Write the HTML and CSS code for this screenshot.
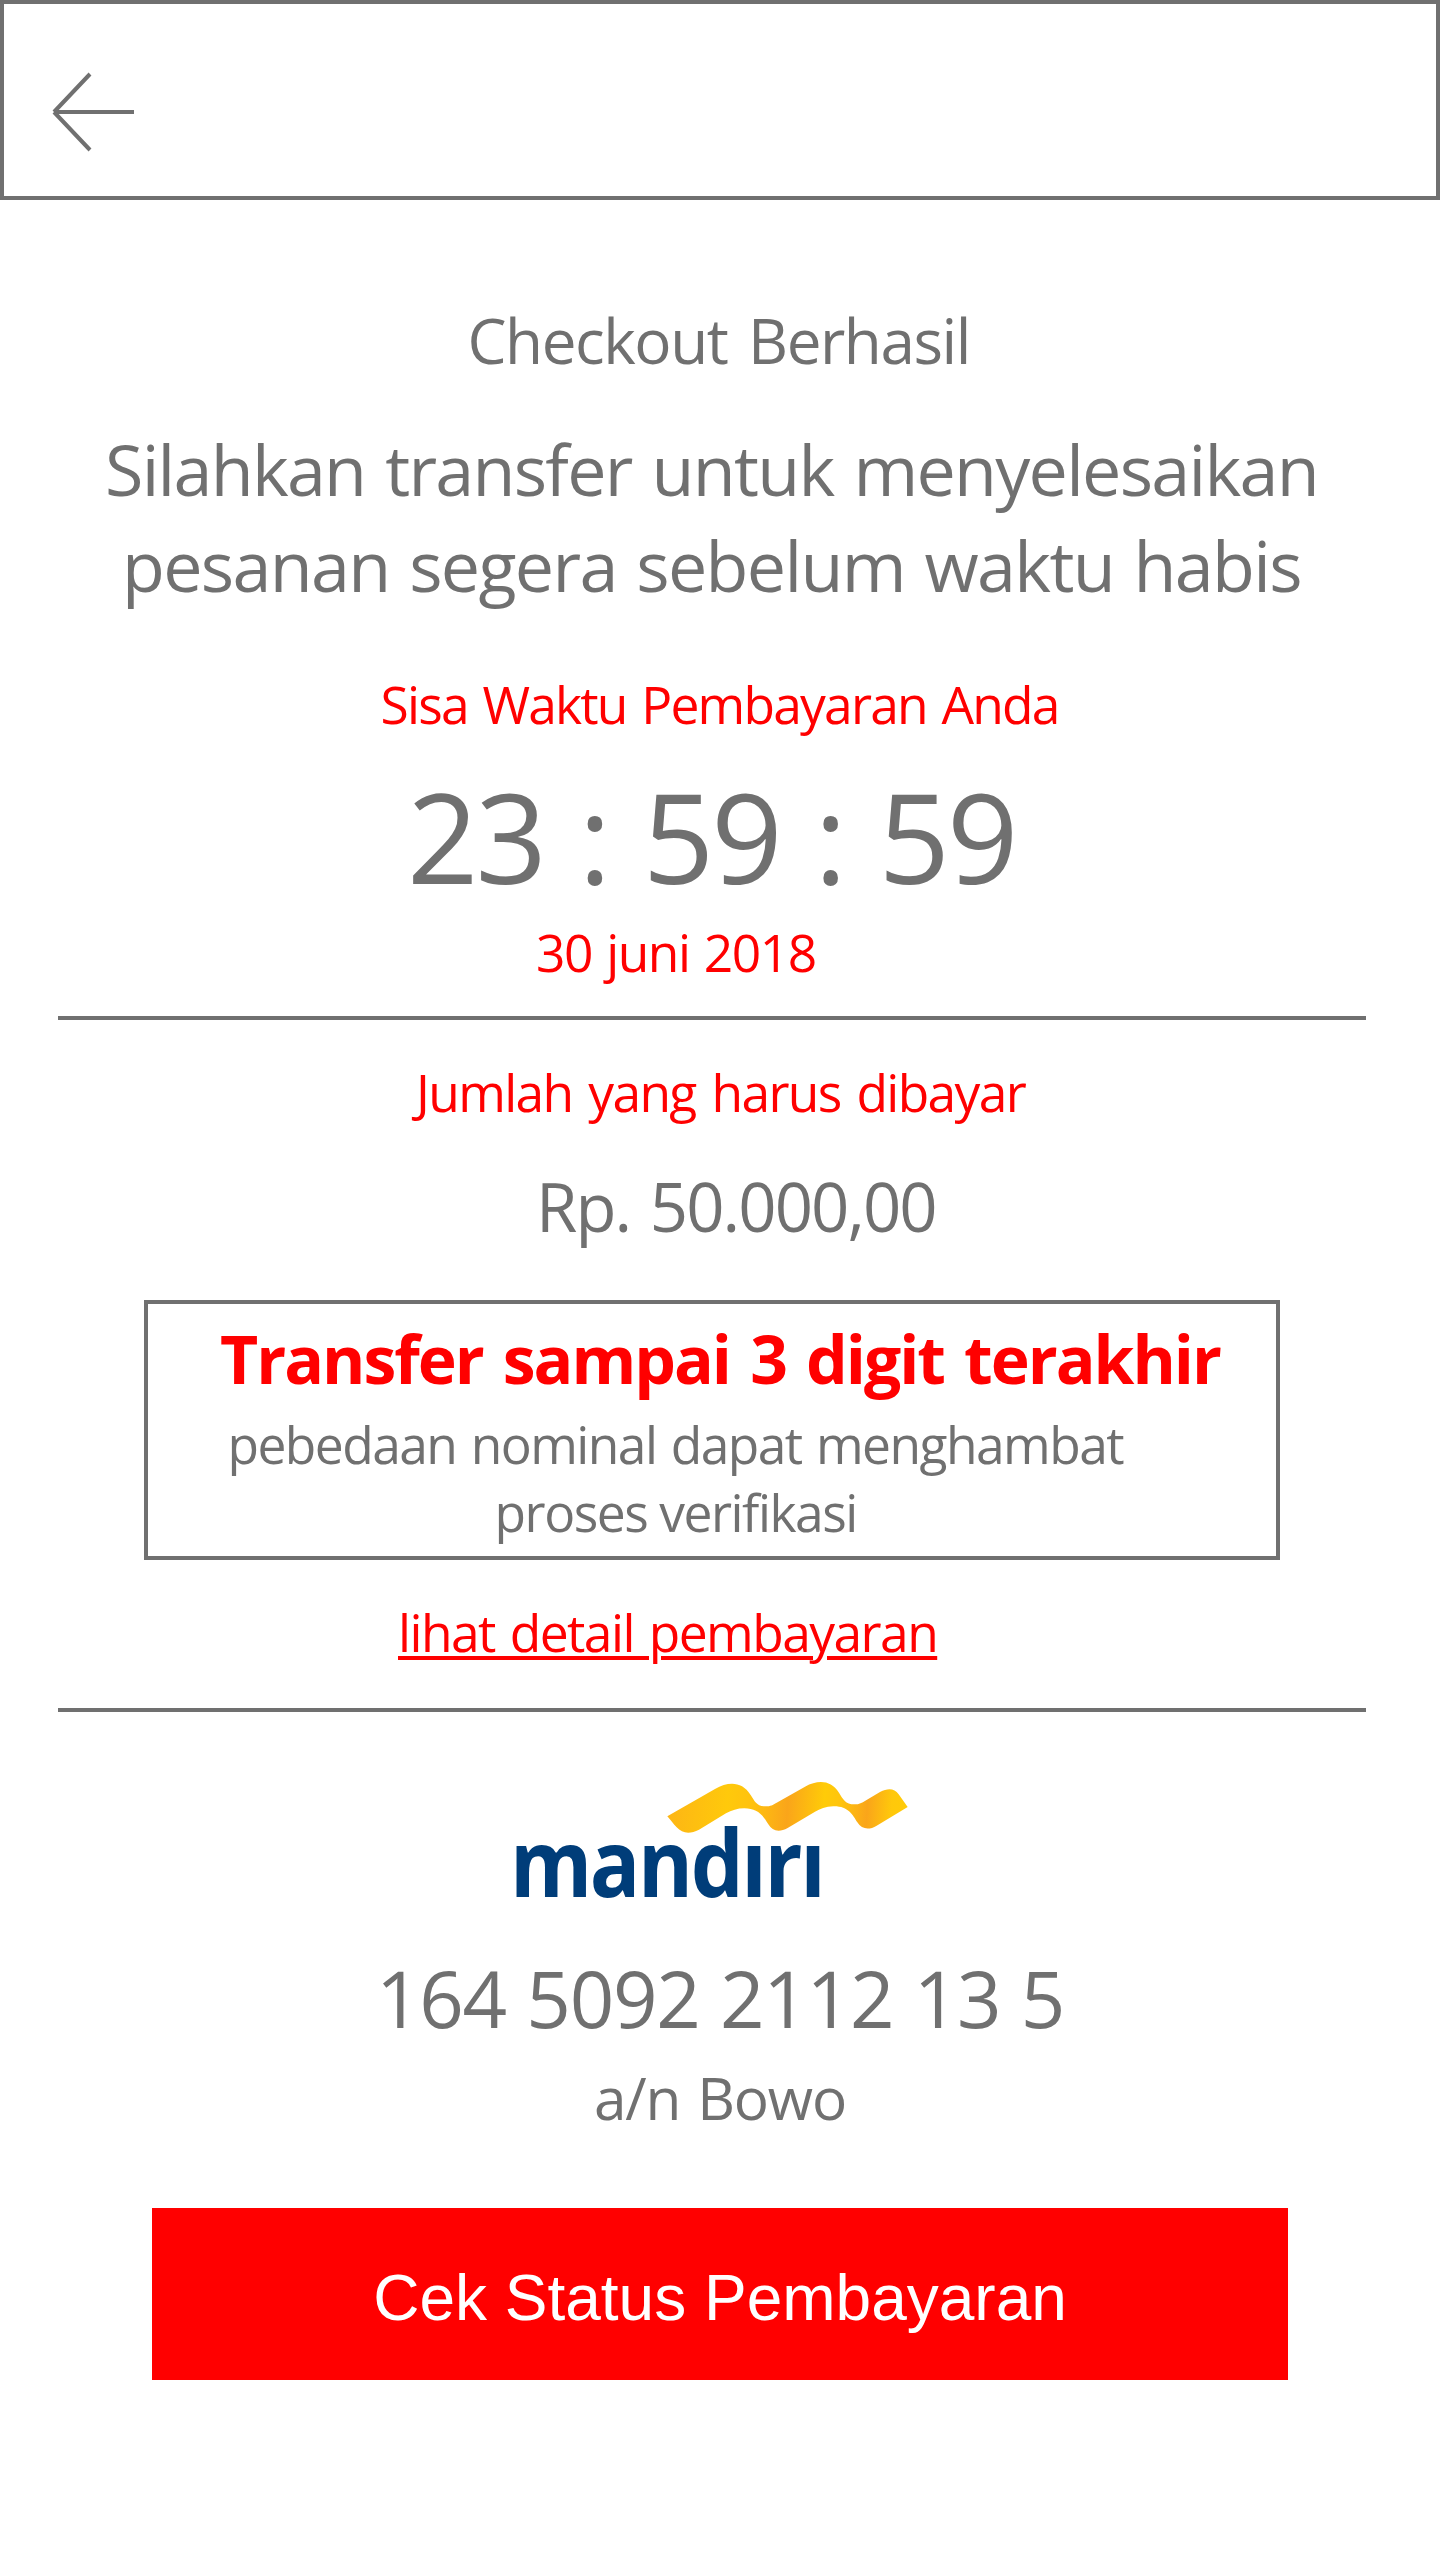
FILE: index.html
```html
<!DOCTYPE html>
<html lang="id">
<head>
<meta charset="utf-8">
<title>Checkout Berhasil</title>
<link rel="stylesheet" href="styles.css">
</head>
<body>
<header class="topbar">
  <svg class="back" width="84" height="80" viewBox="52 72 84 80" fill="none" stroke="#707070" stroke-width="4" role="img" aria-label="Kembali">
    <path d="M134 112H54M90 74L54 112M90 150L54 112"/>
  </svg>
</header>
<main class="page">
  <h1 class="title">Checkout Berhasil</h1>
  <p class="intro"><span class="intro-a">Silahkan transfer untuk menyelesaikan</span> <span class="intro-b">pesanan segera sebelum waktu habis</span></p>
  <p class="label remaining">Sisa Waktu Pembayaran Anda</p>
  <div class="clock">23 : 59 : 59</div>
  <p class="label date">30 juni 2018</p>
  <hr class="rule">
  <p class="label due">Jumlah yang harus dibayar</p>
  <p class="amount">Rp. 50.000,00</p>
  <section class="notice">
    <h2 class="notice-title">Transfer sampai 3 digit terakhir</h2>
    <p class="notice-text"><span class="notice-a">pebedaan nominal dapat menghambat</span> <span class="notice-b">proses verifikasi</span></p>
  </section>
  <a class="label detail">lihat detail pembayaran</a>
  <hr class="rule rule-bank">
  <svg class="bank" width="440" height="180" viewBox="0 0 440 180">
    <defs>
      <linearGradient id="ribbon" gradientUnits="userSpaceOnUse" x1="22" y1="90" x2="743" y2="140">
        <stop offset="0" stop-color="#fdb515"/>
        <stop offset=".25" stop-color="#ffc90b"/>
        <stop offset=".36" stop-color="#ffc10f"/>
        <stop offset=".5" stop-color="#faa51a"/>
        <stop offset=".65" stop-color="#ffcb08"/>
        <stop offset=".72" stop-color="#ffc40d"/>
        <stop offset=".83" stop-color="#faa51a"/>
        <stop offset=".93" stop-color="#ffc80b"/>
        <stop offset="1" stop-color="#ffcb08"/>
      </linearGradient>
    </defs>
    <text class="bank-name" transform="translate(20 146.7) scale(.9 1)">mandırı</text>
    <path transform="translate(170 20) scale(.33333)" fill="url(#ribbon)" d="M22 139L165 57C205 35 245 33 272 75C285 95 290 109 317 109C332 109 338 105 350 98L435 50C475 29 512 30 537 68C550 88 555 103 584 103C598 103 606 98 616 92L660 66C685 53 703 55 716 73L743 111L650 167C627 181 605 178 592 157C578 135 565 108 520 109C497 110 480 117 465 125L383 174C358 188 337 184 325 163C308 133 290 115 253 115C232 115 215 121 198 130L117 179C90 193 67 191 50 172C40 162 33 152 22 139Z"/>
  </svg>
  <p class="account">164 5092 2112 13 5</p>
  <p class="holder">a/n Bowo</p>
  <button class="status">Cek Status Pembayaran</button>
</main>
</body>
</html>
```
FILE: styles.css
```css
* { box-sizing: border-box; }

body {
  margin: 0;
  background: #fff;
  color: #707070;
  font-family: "Open Sans", "Noto Sans", sans-serif;
  font-variant-ligatures: none;
}

h1, h2, p { margin: 0; font-weight: 400; }

.topbar {
  display: flex;
  align-items: flex-start;
  height: 200px;
  padding: 68px 48px;
  border: 4px solid #707070;
}

.back { display: block; }

.page {
  display: flex;
  flex-direction: column;
  align-items: flex-start;
  height: 2360px;
  white-space: nowrap;
}

.title {
  margin: 98px 0 0 467.5px;
  font-size: 62px;
  line-height: 84px;
  letter-spacing: -1.46px;
  word-spacing: 6px;
}

.intro {
  margin-top: 39px;
  font-size: 70px;
  line-height: 96px;
}

.intro span, .notice-text span { display: block; }
.intro-a { margin-left: 105px; letter-spacing: -1.73px; word-spacing: 3.5px; }
.intro-b { margin-left: 122px; letter-spacing: -1.65px; word-spacing: 3px; }

.label {
  color: #f00;
  font-size: 51.5px;
  line-height: 70px;
}

.remaining { margin: 56px 0 0 380.5px; letter-spacing: -1.78px; word-spacing: 3px; }

.clock {
  margin: 16px 0 0 407px;
  font-size: 125px;
  line-height: 161px;
  letter-spacing: -3px;
  word-spacing: 5px;
}

.date { margin: 1px 0 0 536px; letter-spacing: -1.5px; word-spacing: 2.5px; }

.rule {
  width: 1308px;
  height: 4px;
  margin: 29px 0 0 58px;
  border: 0;
  background: #707070;
}

.due { margin: 37px 0 0 416px; letter-spacing: -1.63px; word-spacing: 4px; }

.amount {
  margin: 33px 0 0 536px;
  font-size: 67px;
  line-height: 92px;
  letter-spacing: -1.9px;
  word-spacing: 4px;
}

.notice {
  width: 1136px;
  height: 260px;
  margin: 48px 0 0 144px;
  padding-top: 9px;
  border: 4px solid #707070;
}

.notice-title {
  margin-left: 72px;
  color: #f00;
  font-size: 66px;
  font-weight: 700;
  line-height: 90px;
  letter-spacing: -2.01px;
  word-spacing: 5px;
}

.notice-text {
  margin-top: 7px;
  font-size: 51.5px;
  line-height: 68px;
}

.notice-a { margin-left: 79.5px; letter-spacing: -1.54px; word-spacing: 2.5px; }
.notice-b { margin-left: 346.5px; letter-spacing: -1.46px; }

.detail {
  margin: 37px 0 0 398px;
  letter-spacing: -1.54px;
  word-spacing: 3px;
  text-decoration: underline;
  text-decoration-thickness: 4px;
  text-underline-offset: 4px;
}

.rule-bank { margin-top: 41px; }

.bank { display: block; margin: 38px 0 0 490px; }

.bank-name {
  fill: #003d79;
  font-size: 93px;
  font-weight: 700;
  letter-spacing: -2.6px;
}

.account {
  margin: 15px 0 0 376px;
  font-size: 78px;
  line-height: 106px;
  letter-spacing: -1.3px;
  word-spacing: 1.5px;
}

.holder {
  margin: 6px 0 0 594px;
  font-size: 58.5px;
  line-height: 80px;
  letter-spacing: -1.2px;
  word-spacing: 3px;
}

.status {
  width: 1136px;
  height: 172px;
  margin: 71px 0 0 152px;
  padding: 8px 0 0;
  border: 0;
  background: #f00;
  color: #fff;
  font: 64px "Liberation Sans", Arial, sans-serif;
}
```
